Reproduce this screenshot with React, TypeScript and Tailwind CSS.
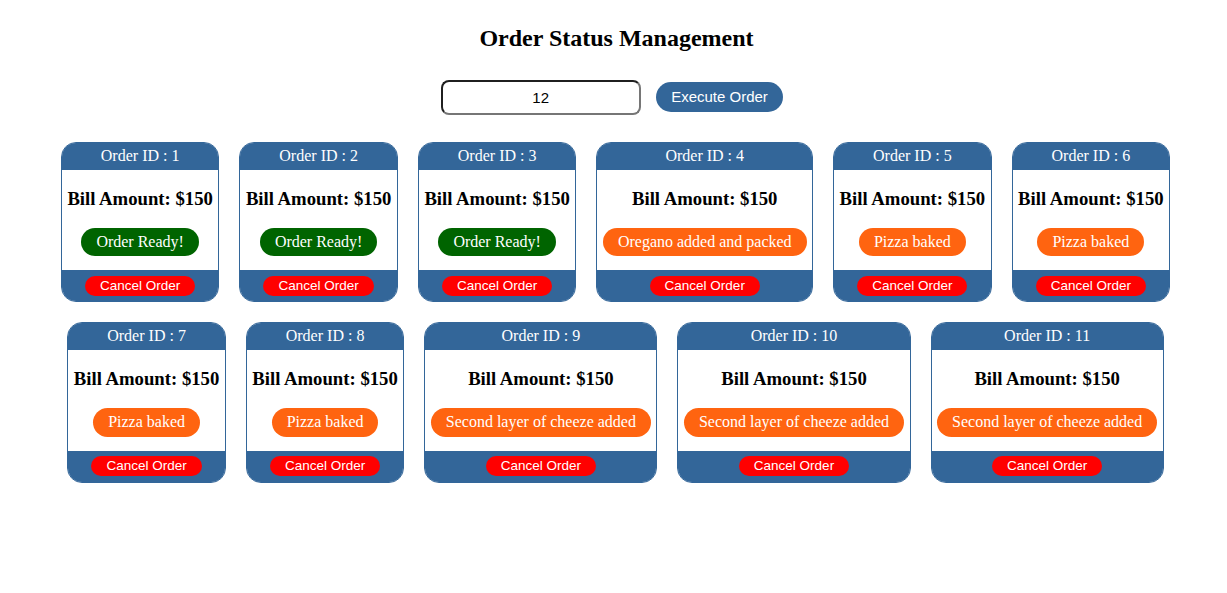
import React from "react";

type Order = { id: number; status: string; color: string };

const orders: Order[] = [
  { id: 1, status: "Order Ready!", color: "green" },
  { id: 2, status: "Order Ready!", color: "green" },
  { id: 3, status: "Order Ready!", color: "green" },
  { id: 4, status: "Oregano added and packed", color: "orange" },
  { id: 5, status: "Pizza baked", color: "orange" },
  { id: 6, status: "Pizza baked", color: "orange" },
  { id: 7, status: "Pizza baked", color: "orange" },
  { id: 8, status: "Pizza baked", color: "orange" },
  { id: 9, status: "Second layer of cheeze added", color: "orange" },
  { id: 10, status: "Second layer of cheeze added", color: "orange" },
  { id: 11, status: "Second layer of cheeze added", color: "orange" },
];

function Card({ o }: { o: Order }) {
  return (
    <div className="m-[10px] flex flex-col overflow-hidden rounded-[15px] border border-[#336699] bg-white">
      <div className="flex h-[27px] items-center justify-center bg-[#336699] text-center text-[16px] leading-[18.4px] text-white">
        Order ID : {o.id}
      </div>
      <div className="flex flex-col items-center px-[5.5px] pt-[18px] pb-[14px]">
        <h3 className="mb-[18.7px] text-[18.72px] font-bold leading-[21.5px] text-black whitespace-nowrap">
          Bill Amount: $150
        </h3>
        <span
          className={
            (o.color === "green" ? "bg-[#006400]" : "bg-[#ff6410]") +
            " whitespace-nowrap rounded-full px-[15px] py-[5px] text-[16px] leading-[18.4px] text-white"
          }
        >
          {o.status}
        </span>
      </div>
      <div className="flex justify-center bg-[#336699] py-[5.5px]">
        <button className="h-[20px] rounded-full bg-[#ff0000] px-[15px] font-['Liberation_Sans',Arial,sans-serif] text-[13.5px] leading-[20px] text-white">
          Cancel Order
        </button>
      </div>
    </div>
  );
}

export default function App() {
  return (
    <div className="min-h-[593px] w-full bg-white font-['Liberation_Serif','Times_New_Roman',serif] text-black">
      <div className="pt-[25px] pl-[6px] text-center">
        <h2 className="text-[24px] font-bold leading-[27.6px]">Order Status Management</h2>
      </div>
      <div className="mt-[27px] flex items-center justify-center gap-[15px] pr-[3px]">
        <input
          defaultValue="12"
          className="h-[35px] w-[200px] rounded-[8px] border-2 border-t-[#1f1f1f] border-l-[#1f1f1f] border-b-[#767676] border-r-[#767676] bg-white text-center font-['Liberation_Sans',Arial,sans-serif] text-[15px] text-black outline-none"
        />
        <button className="h-[30px] rounded-full bg-[#336699] px-[15.5px] font-['Liberation_Sans',Arial,sans-serif] text-[15px] text-white">
          Execute Order
        </button>
      </div>
      <div className="mt-[17px] flex flex-wrap justify-center pl-[4px]">
        {orders.map((o) => (
          <Card key={o.id} o={o} />
        ))}
      </div>
    </div>
  );
}
